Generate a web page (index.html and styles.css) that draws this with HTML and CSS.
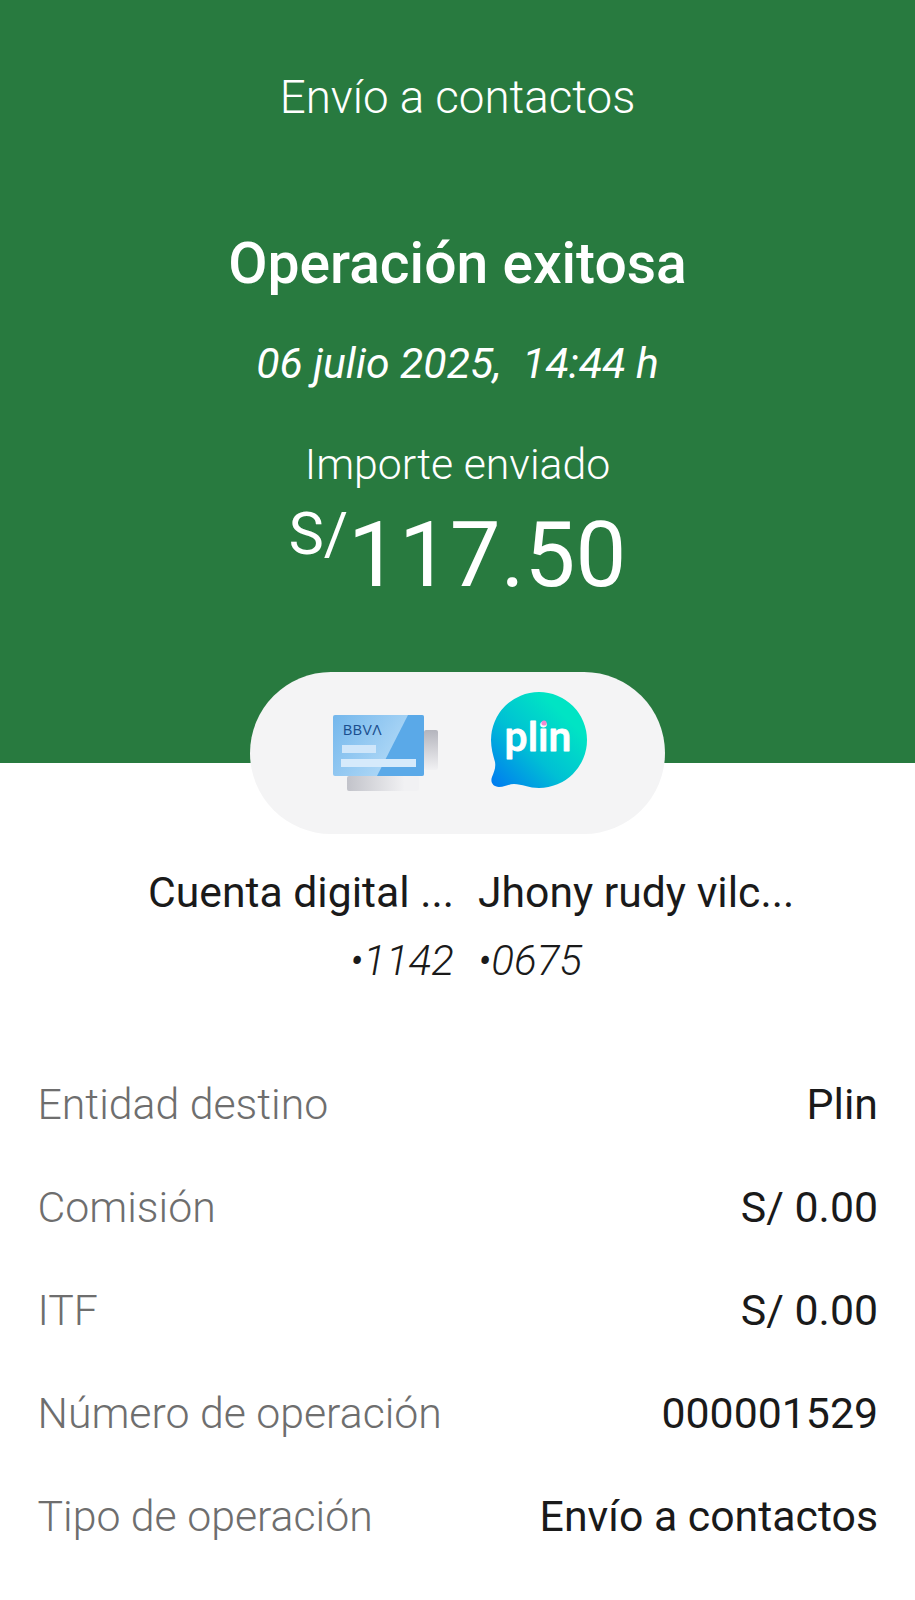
FILE: index.html
```html
<!DOCTYPE html>
<html lang="es">
  <head>
    <meta charset="UTF-8" />
    <meta name="viewport" content="width=device-width, initial-scale=1.0" />
    <title>Operación exitosa</title>
    <link rel="stylesheet" href="styles.css">
  </head>
  <body>
    <header class="hero">
      <h1 class="hero-title">Envío a contactos</h1>
      <h2 class="hero-status">Operación exitosa</h2>
      <p class="hero-date">06 julio 2025,&nbsp; 14:44 h</p>
      <p class="hero-label">Importe enviado</p>
      <p class="hero-amount"><span class="hero-currency">S/</span>117.50</p>
    </header>

    <div class="logos-wrap">
      <div class="logos">
        <svg class="logo-card" viewBox="0 0 106 76" width="106" height="76">
          <defs>
            <linearGradient id="cardBack" x1="0" y1="0" x2="1" y2="0">
              <stop offset="0" stop-color="#c2c3ca" />
              <stop offset="0.8" stop-color="#f1f1f3" />
            </linearGradient>
            <linearGradient id="cardBackSide" x1="0" y1="0" x2="0" y2="1">
              <stop offset="0" stop-color="#b4b5bd" />
              <stop offset="1" stop-color="#f1f1f3" />
            </linearGradient>
            <linearGradient id="cardFront" x1="0" y1="0" x2="1" y2="0.5">
              <stop offset="0" stop-color="#74b7ec" />
              <stop offset="0.75" stop-color="#a8d4f5" />
            </linearGradient>
          </defs>
          <rect x="14" y="61" width="72" height="15" rx="2" fill="url(#cardBack)" />
          <rect x="91" y="15" width="14" height="40" rx="2" fill="url(#cardBackSide)" />
          <rect x="0" y="0" width="91" height="61" rx="2" fill="url(#cardFront)" />
          <path d="M75 0h14a2 2 0 0 1 2 2v57a2 2 0 0 1-2 2H44z" fill="#5aa9e8" />
          <text x="10" y="20" class="logo-card-text">BBVΛ</text>
          <rect x="9" y="30" width="34" height="8" fill="#cfe6fa" />
          <rect x="8" y="44" width="75" height="8" fill="#d6eafb" />
        </svg>
        <svg class="logo-plin" viewBox="0 0 96 96" width="96" height="96">
          <defs>
            <linearGradient id="plinFill" x1="0" y1="1" x2="0.9" y2="0.1">
              <stop offset="0" stop-color="#0077f2" />
              <stop offset="0.45" stop-color="#00c0d4" />
              <stop offset="0.85" stop-color="#00e4c4" />
            </linearGradient>
          </defs>
          <path d="M48 0a48 48 0 0 1 0 96c-10 0-17-4-25-4-5 0-9 3-15 3-6 0-9-5-7-10 2-5 4-9 3-15C2 63 0 56 0 48A48 48 0 0 1 48 0z" fill="url(#plinFill)" />
          <text x="47" y="59" class="logo-plin-text">plin</text>
          <circle cx="53" cy="31" r="2.6" fill="#f08bd0" />
        </svg>
      </div>
    </div>

    <section class="parties">
      <div class="party party-from">
        <div class="party-name">Cuenta digital ...</div>
        <div class="party-num">•1142</div>
      </div>
      <div class="party party-to">
        <div class="party-name">Jhony rudy vilc...</div>
        <div class="party-num">•0675</div>
      </div>
    </section>

    <section class="details">
      <div class="row"><span class="row-label">Entidad destino</span><span class="row-value">Plin</span></div>
      <div class="row"><span class="row-label">Comisión</span><span class="row-value">S/ 0.00</span></div>
      <div class="row"><span class="row-label">ITF</span><span class="row-value">S/ 0.00</span></div>
      <div class="row"><span class="row-label">Número de operación</span><span class="row-value">000001529</span></div>
      <div class="row"><span class="row-label">Tipo de operación</span><span class="row-value">Envío a contactos</span></div>
    </section>
  </body>
</html>
```

FILE: styles.css
```css
body {
  margin: 0;
  padding: 0;
  font-family: Roboto, Arial, sans-serif;
  background-color: #fff;
  height: 1600px;
  overflow: hidden;
}

h1,
h2,
p {
  margin: 0;
  font-weight: 400;
}

.hero {
  height: 763px;
  box-sizing: border-box;
  padding-top: 68px;
  background-color: #287a3f;
  color: #fff;
  text-align: center;
}

.hero-title {
  font-size: 45.7px;
  line-height: 60px;
  font-weight: 300;
}

.hero-status {
  margin-top: 104px;
  font-size: 57px;
  line-height: 64px;
  font-weight: 500;
}

.hero-date {
  margin-top: 41px;
  font-size: 42.7px;
  line-height: 52px;
  font-style: italic;
}

.hero-label {
  margin-top: 49px;
  font-size: 42.8px;
  line-height: 52px;
  font-weight: 300;
}

.hero-amount {
  margin-top: 15px;
  font-size: 90.5px;
  line-height: 100px;
}

.hero-currency {
  font-size: 59px;
  vertical-align: 32px;
  line-height: 0;
}

.logos-wrap {
  display: flex;
  justify-content: center;
  margin-top: -91px;
}

.logos {
  width: 415px;
  height: 162px;
  box-sizing: border-box;
  padding-top: 20px;
  display: flex;
  justify-content: center;
  align-items: flex-start;
  gap: 52px;
  border-radius: 81px;
  background-color: #f4f4f5;
}

.logo-card {
  margin-top: 23px;
  margin-left: 5px;
}

.logo-card-text {
  font-family: "Liberation Sans", Arial, sans-serif;
  font-size: 14px;
  letter-spacing: 0.4px;
  fill: #1a4f8f;
}

.logo-plin-text {
  font-family: Roboto, Arial, sans-serif;
  font-size: 41px;
  font-weight: 500;
  text-anchor: middle;
  fill: #fff;
  stroke: #fff;
  stroke-width: 0.8px;
  stroke-linejoin: round;
}

.parties {
  display: grid;
  grid-template-columns: 454px 1fr;
  column-gap: 24px;
  margin-top: 32px;
}

.party-from {
  text-align: right;
}

.party-name {
  font-size: 42.7px;
  line-height: 52px;
  color: #1a1a1a;
}

.party-num {
  margin-top: 17px;
  font-size: 42.2px;
  line-height: 52px;
  font-weight: 300;
  font-style: italic;
  color: #1a1a1a;
}

.details {
  margin-top: 91px;
  padding: 0 37px 0 37.5px;
}

.row {
  display: flex;
  justify-content: space-between;
  height: 103px;
  font-size: 42.8px;
  line-height: 52px;
}

.row-label {
  font-weight: 300;
  color: #6e6e6e;
}

.row-value {
  color: #1a1a1a;
}
```
